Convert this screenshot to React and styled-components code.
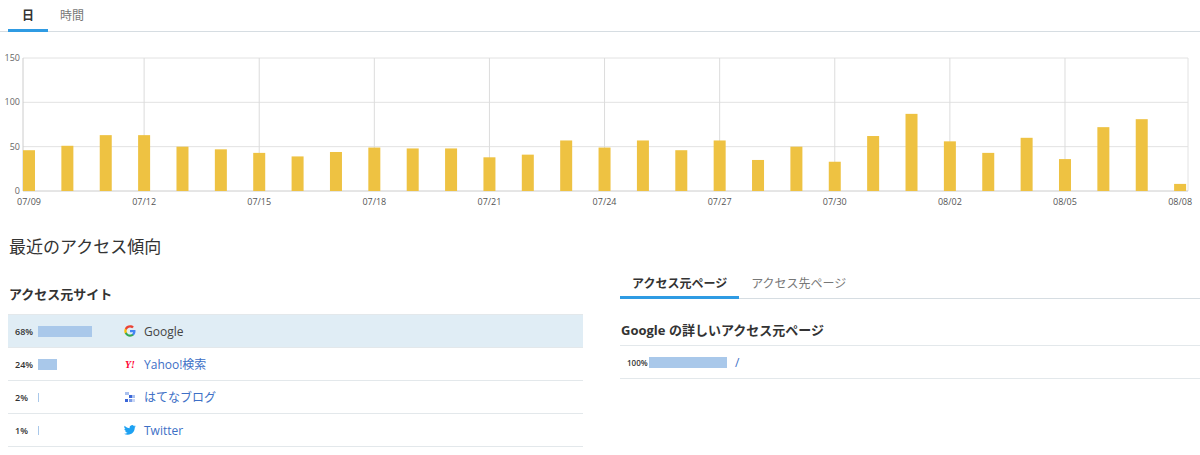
import React from "react";
import styled, { createGlobalStyle } from "styled-components";

const G = createGlobalStyle`
  body{margin:0;background:#fff;font-family:"Open Sans","Noto Sans CJK JP",sans-serif;color:#333;}
`;
const Page = styled.div`width:1200px;height:455px;overflow:hidden;`;
const Tabs = styled.div`display:flex;border-bottom:1px solid #d6dde2;padding-left:${p=>p.$pl||0}px;height:${p=>p.$h||31}px;align-items:stretch;`;
const Tab = styled.div`
  padding:0 ${p=>p.$px||12}px;display:flex;align-items:center;font-size:${p=>p.$fs||12}px;font-weight:${p=>p.$active?700:400};
  color:${p=>p.$active?"#333":"#777"};border-bottom:3px solid ${p=>p.$active?"#2f9be3":"transparent"};margin-bottom:-1px;
`;
const ChartBox = styled.div`height:160px;margin-top:19px;`;
const Heading = styled.h2`margin:22px 0 0 9px;font-size:17px;font-weight:400;color:#333;height:30px;`;
const Cols = styled.div`display:flex;gap:37px;padding-left:8px;margin-top:15px;`;
const Col = styled.div`width:${p=>p.$w}px;`;
const SubTitle = styled.div`font-size:13px;font-weight:700;padding:${p=>p.$pad};height:${p=>p.$h}px;box-sizing:border-box;border-bottom:1px solid #e3e8eb;`;
const Row = styled.div`height:33px;display:flex;align-items:center;border-bottom:1px solid #e3e8eb;box-sizing:border-box;background:${p=>p.$hl?"#e0edf5":"transparent"};padding-left:7px;`;
const Pct = styled.span`font-size:9px;font-weight:600;width:${p=>p.$w}px;color:#333;`;
const BarTrack = styled.div`width:${p=>p.$w}px;height:11px;display:flex;align-items:center;`;
const Bar = styled.div`height:${p=>p.$h||11}px;background:#a9c8ea;`;
const Site = styled.div`display:flex;align-items:center;gap:8px;font-size:12px;color:${p=>p.$c};`;
const Icon = styled.span`width:12px;height:12px;display:inline-flex;align-items:center;justify-content:center;`;
const YIcon = styled.span`color:#ff0033;font-size:10px;font-weight:900;font-family:"Liberation Serif",serif;font-style:italic;`;

const vals=[46,51,63,63,50,47,43,39,44,49,48,48,38,41,57,49,57,46,57,35,50,33,62,87,56,43,60,36,72,81,8];
const labels=["07/09","07/12","07/15","07/18","07/21","07/24","07/27","07/30","08/02","08/05","08/08"];

function Chart(){
  const x0=23,x1=1188,y0=7,y1=140;
  const cx=i=>29+i*38.37;
  const y=v=>y1-(v/150)*(y1-y0);
  return (
    <svg width="1200" height="160" style={{display:"block"}}>
      {[150,100,50].map(v=><line key={v} x1={x0} x2={x1} y1={y(v)} y2={y(v)} stroke="#e2e2e2"/>)}
      {labels.map((l,k)=>k>0&&k<10?<line key={l} x1={cx(k*3)} x2={cx(k*3)} y1={y0} y2={y1} stroke="#dcdcdc"/>:null)}
      <line x1={x1} x2={x1} y1={y0} y2={y1} stroke="#e2e2e2"/>
      <line x1={x0} x2={x0} y1={y0} y2={y1} stroke="#ccc"/>
      <line x1={x0} x2={x1} y1={y1} y2={y1} stroke="#ccc"/>
      {vals.map((v,i)=><rect key={i} x={cx(i)-6} y={y(v)} width="12" height={y1-y(v)} fill="#eec242"/>)}
      {[150,100,50,0].map(v=><text key={v} x="20" y={y(v)+3} textAnchor="end" fontSize="9" fill="#666" fontFamily="Open Sans">{v}</text>)}
      {labels.map((l,k)=><text key={l} x={cx(k*3)} y="154" textAnchor="middle" fontSize="9" fill="#555" fontFamily="Open Sans">{l}</text>)}
    </svg>
  );
}

const GoogleIcon=()=>(<svg width="12" height="12" viewBox="0 0 24 24"><path fill="#4285F4" d="M23 12.3c0-.8-.1-1.6-.2-2.3H12v4.4h6.2c-.3 1.4-1.1 2.6-2.3 3.4v2.8h3.7c2.2-2 3.4-5 3.4-8.3z"/><path fill="#34A853" d="M12 23.5c3.1 0 5.7-1 7.6-2.8l-3.7-2.8c-1 .7-2.3 1.1-3.9 1.1-3 0-5.5-2-6.4-4.7H1.8v2.9C3.7 21 7.6 23.5 12 23.5z"/><path fill="#FBBC05" d="M5.6 14.3c-.2-.7-.4-1.4-.4-2.3s.1-1.600.4-2.3V6.8H1.8C1 8.4.5 10.1.5 12s.5 3.6 1.3 5.2l3.8-2.9z"/><path fill="#EA4335" d="M12 5c1.7 0 3.2.6 4.4 1.7l3.3-3.3C17.7 1.5 15.1.5 12 .5 7.6.5 3.7 3 1.8 6.8l3.8 2.9C6.5 7 9 5 12 5z"/></svg>);
const HatenaIcon=()=>(<svg width="12" height="12" viewBox="0 0 12 12"><rect x="1" y="1" width="4" height="3" fill="#a9c0ee"/><rect x="5" y="4" width="3" height="3" fill="#3a66d8"/><rect x="8" y="4" width="3" height="3" fill="#a9c0ee"/><rect x="1" y="8" width="3" height="3" fill="#3a66d8"/><rect x="5" y="8" width="3" height="3" fill="#7c9ce6"/><rect x="8" y="8" width="3" height="3" fill="#c8d6f5"/></svg>);
const TwitterIcon=()=>(<svg width="12" height="12" viewBox="0 0 24 24"><path fill="#1da1f2" d="M23.6 4.6c-.9.4-1.8.6-2.8.8 1-.6 1.8-1.6 2.1-2.7-.9.6-2 1-3.1 1.2a4.9 4.9 0 0 0-8.4 4.5C7.4 8.2 3.8 6.3 1.4 3.3a4.9 4.9 0 0 0 1.5 6.6c-.8 0-1.6-.3-2.2-.6 0 2.4 1.7 4.4 3.9 4.8-.7.2-1.5.2-2.2.1.6 2 2.4 3.4 4.6 3.4A9.9 9.9 0 0 1 0 19.5 14 14 0 0 0 7.5 21.7c9.1 0 14-7.5 14-14v-.6c1-.7 1.8-1.6 2.1-2.5z"/></svg>);

const sites=[
  {p:"68%",w:54,name:"Google",c:"#444",icon:<GoogleIcon/>,hl:true},
  {p:"24%",w:19,name:"Yahoo!検索",c:"#3d6fc6",icon:<YIcon>Y!</YIcon>},
  {p:"2%",w:1,name:"はてなブログ",c:"#3d6fc6",icon:<HatenaIcon/>},
  {p:"1%",w:1,name:"Twitter",c:"#3d6fc6",icon:<TwitterIcon/>},
];

export default function App(){
  return (<Page><G/>
    <Tabs $h={31} $pl={8}><Tab $active $px={14}>日</Tab><Tab>時間</Tab></Tabs>
    <ChartBox><Chart/></ChartBox>
    <Heading>最近のアクセス傾向</Heading>
    <Cols>
      <Col $w={575}>
        <SubTitle $pad="6px 0 0 1px" $h={37}>アクセス元サイト</SubTitle>
        {sites.map(s=>(
          <Row key={s.name} $hl={s.hl}>
            <Pct $w={23}>{s.p}</Pct>
            <BarTrack $w={86}><Bar style={{width:s.w}} $h={s.w<2?9:11}/></BarTrack>
            <Site $c={s.c}><Icon>{s.icon}</Icon>{s.name}</Site>
          </Row>
        ))}
      </Col>
      <Col $w={580}>
        <Tabs $h={29} style={{marginTop:-9}}><Tab $active $fs={12}>アクセス元ページ</Tab><Tab $fs={12}>アクセス先ページ</Tab></Tabs>
        <SubTitle $pad="21px 0 0 1px" $h={47}>Google の詳しいアクセス元ページ</SubTitle>
        <Row><Pct $w={22} style={{fontSize:8}}>100%</Pct><BarTrack $w={86}><Bar style={{width:78}}/></BarTrack><Site $c="#3d6fc6">/</Site></Row>
      </Col>
    </Cols>
  </Page>);
}
